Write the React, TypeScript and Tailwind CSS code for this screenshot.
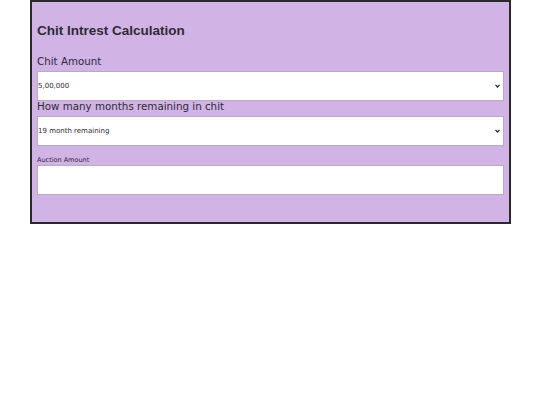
import React from "react";

function Chevron() {
  return (
    <svg className="pointer-events-none absolute right-[4px] top-[13px]" width="5" height="4" viewBox="0 0 5 4">
      <path d="M0.5 0.8 L2.5 3 L4.5 0.8" fill="none" stroke="#222" strokeWidth="1.2" />
    </svg>
  );
}

export default function App() {
  return (
    <div className="w-[540px] h-[405px] bg-white" style={{ fontFamily: '"DejaVu Sans", sans-serif' }}>
      <div className="ml-[30px] w-[481px] h-[224px] border-2 border-[#2a2a2a] bg-[#d1b3e6] px-[5px] text-[#2e2a36]">
        <h1 className="pt-[20px] text-[13.5px] font-bold leading-[18px]" style={{ fontFamily: '"Liberation Sans", Arial, sans-serif' }}>
          Chit Intrest Calculation
        </h1>
        <label className="mt-[14px] block text-[10.3px] leading-[14px]">Chit Amount</label>
        <div className="relative mt-[3px] w-[467px]">
          <select className="block h-[30px] w-full appearance-none border border-[#b9a9c4] bg-white pl-0 text-[7px]">
            <option>5,00,000</option>
          </select>
          <Chevron />
        </div>
        <label className="block text-[10.3px] leading-[11px]">How many months remaining in chit</label>
        <div className="relative mt-[4px] w-[467px]">
          <select className="block h-[30px] w-full appearance-none border border-[#b9a9c4] bg-white pl-0 text-[7px]">
            <option>19 month remaining</option>
          </select>
          <Chevron />
        </div>
        <label className="mt-[10px] block text-[6.5px] leading-[8px]">Auction Amount</label>
        <input className="mt-[1px] block h-[30px] w-[467px] border border-[#b9a9c4] bg-white px-0 text-[7px]" />
      </div>
    </div>
  );
}
